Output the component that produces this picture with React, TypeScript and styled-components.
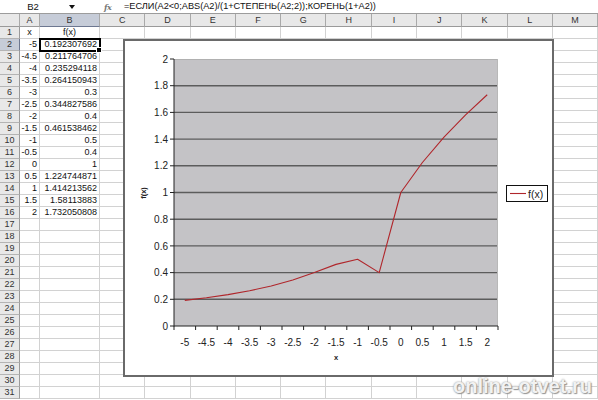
import React from 'react';
import styled, { createGlobalStyle } from 'styled-components';

const GlobalStyle = createGlobalStyle`
  html, body { margin: 0; padding: 0; background: #fff; overflow: hidden; }
  body { font-family: "Liberation Sans", Arial, sans-serif; }
`;

const Page = styled.div`
  position: relative;
  width: 598px;
  height: 400px;
  overflow: hidden;
  background: #fff;
  font-family: "Liberation Sans", Arial, sans-serif;
`;

const FormulaBar = styled.div`
  display: flex;
  align-items: center;
  height: 14px;
  box-sizing: border-box;
  border-bottom: 1px solid #9c9c9c;
  background: #fff;
  font-size: 9px;
  color: #111;
`;

const NameBox = styled.div`
  width: 66px;
  text-align: center;
  line-height: 13px;
  font-size: 9.5px;
`;

const DropArrow = styled.span`
  width: 0;
  height: 0;
  margin-left: 3px;
  border-left: 3px solid transparent;
  border-right: 3px solid transparent;
  border-top: 4px solid #111;
`;

const FxIcon = styled.span`
  margin-left: 29px;
  width: 17px;
  font-family: "DejaVu Serif", "Liberation Serif", serif;
  font-style: italic;
  font-weight: bold;
  font-size: 8px;
  color: #777;
  letter-spacing: -0.5px;
`;

const FormulaText = styled.span`
  margin-left: 3px;
  white-space: nowrap;
  line-height: 13px;
  font-size: 9.2px;
`;

const Sheet = styled.div`
  display: grid;
  grid-template-columns: 20px 20px 60px repeat(10, 45.3px) 1fr;
  grid-template-rows: 13px;
  grid-auto-rows: 12px;
  font-size: 9px;
  color: #111;
`;

const HeaderCell = styled.div<{ $selected?: boolean }>`
  box-sizing: border-box;
  display: flex;
  align-items: center;
  justify-content: center;
  background: ${p => (p.$selected ? '#c6ccd8' : '#e8e8e8')};
  color: #333;
  border-right: 1px solid #a9a9a9;
  border-bottom: 1px solid ${p => (p.$selected ? '#6d7790' : '#9a9a9a')};
  line-height: 11px;
`;

const RowHeader = styled.div<{ $selected?: boolean }>`
  box-sizing: border-box;
  display: flex;
  align-items: center;
  justify-content: center;
  background: ${p => (p.$selected ? '#c6ccd8' : '#e8e8e8')};
  color: #333;
  border-right: 1px solid ${p => (p.$selected ? '#6d7790' : '#9a9a9a')};
  border-bottom: 1px solid #b4b4b4;
  line-height: 11px;
`;

const Cell = styled.div<{ $align?: 'left' | 'center' | 'right'; $active?: boolean }>`
  box-sizing: border-box;
  position: relative;
  display: flex;
  align-items: center;
  justify-content: ${p => (p.$align === 'center' ? 'center' : p.$align === 'right' ? 'flex-end' : 'flex-start')};
  padding: 0 2px;
  border-right: 1px solid #d2d2d2;
  border-bottom: 1px solid #d2d2d2;
  white-space: nowrap;
  line-height: 11px;
  ${p =>
    p.$active
      ? `outline: 2px solid #000; outline-offset: -1px; z-index: 2;
         &::after { content: ''; position: absolute; right: -3px; bottom: -3px; width: 4px; height: 4px; background: #000; border: 1px solid #fff; }`
      : ''}
`;

const ChartFrame = styled.div`
  position: absolute;
  left: 123px;
  top: 39px;
  width: 431px;
  height: 338px;
  box-sizing: border-box;
  border: 2px solid #6a6a6a;
  background: #fff;
  z-index: 5;
`;

const ChartSvg = styled.svg`
  display: block;
  font-family: "Liberation Sans", Arial, sans-serif;
`;

const Watermark = styled.div`
  position: absolute;
  left: 453px;
  top: 376px;
  font-family: "Liberation Sans", Arial, sans-serif;
  font-weight: bold;
  font-size: 20px;
  line-height: 20px;
  color: #f2f2f2;
  text-shadow: 0 0 2px #8a8a8a, 1px 1px 1px #9a9a9a;
  z-index: 10;
  white-space: nowrap;
`;

const COLS = ['A', 'B', 'C', 'D', 'E', 'F', 'G', 'H', 'I', 'J', 'K', 'L', 'M'];

const XS = ['-5', '-4.5', '-4', '-3.5', '-3', '-2.5', '-2', '-1.5', '-1', '-0.5', '0', '0.5', '1', '1.5', '2'];
const FX = [
  '0.192307692', '0.211764706', '0.235294118', '0.264150943', '0.3', '0.344827586', '0.4',
  '0.461538462', '0.5', '0.4', '1', '1.224744871', '1.414213562', '1.58113883', '1.732050808',
];

const ROWS = 31;

function Chart() {
  const L = 49, T = 18, R = 373, B = 285;
  const W = R - L, H = B - T;
  const step = W / 15;
  const yOf = (v: number) => B - (v / 2) * H;
  const pts = FX.map((v, i) => `${(L + step * (i + 0.5)).toFixed(2)},${yOf(parseFloat(v)).toFixed(2)}`).join(' ');
  const yVals = [0, 0.2, 0.4, 0.6, 0.8, 1, 1.2, 1.4, 1.6, 1.8, 2];
  return (
    <ChartSvg width={427} height={334} viewBox="0 0 427 334">
      <rect x={L} y={T} width={W} height={H} fill="#c4c3c6" />
      {yVals.slice(1, 10).map(v => (
        <line key={v} x1={L} x2={R} y1={yOf(v)} y2={yOf(v)} stroke="#5c5c5c" strokeWidth={1.4} />
      ))}
      <line x1={L} x2={R} y1={T + 0.5} y2={T + 0.5} stroke="#b0b0b0" strokeWidth={1} />
      <line x1={R - 0.5} x2={R - 0.5} y1={T} y2={B} stroke="#b8b8b8" strokeWidth={1} />
      <line x1={L} x2={L} y1={T} y2={B + 0.5} stroke="#222" strokeWidth={1} />
      <line x1={L} x2={R} y1={B} y2={B} stroke="#222" strokeWidth={1} />
      {yVals.map(v => (
        <g key={'y' + v}>
          <line x1={L - 4} x2={L} y1={yOf(v)} y2={yOf(v)} stroke="#222" strokeWidth={1} />
          <text x={L - 6} y={yOf(v) + 3.6} fontSize={10} textAnchor="end" fill="#222">
            {String(v)}
          </text>
        </g>
      ))}
      {Array.from({ length: 16 }, (_, i) => (
        <line key={'t' + i} x1={L + step * i} x2={L + step * i} y1={B} y2={B + 4} stroke="#222" strokeWidth={1} />
      ))}
      {XS.map((x, i) => (
        <text key={'x' + x} x={L + step * (i + 0.5)} y={305} fontSize={10} textAnchor="middle" fill="#222">
          {x}
        </text>
      ))}
      <text x={211} y={319} fontSize={7.5} fontWeight="bold" textAnchor="middle" fill="#222">
        x
      </text>
      <text
        x={0}
        y={0}
        fontSize={7.5}
        fontWeight="bold"
        textAnchor="middle"
        fill="#222"
        transform="translate(20.5 152) rotate(-90)"
      >
        f(x)
      </text>
      <polyline points={pts} fill="none" stroke="#b0262b" strokeWidth={1.1} strokeLinejoin="round" />
      <rect x={381.5} y={144.5} width={41} height={16} fill="#fff" stroke="#111" strokeWidth={1} />
      <line x1={385} x2={401} y1={152.5} y2={152.5} stroke="#b0262b" strokeWidth={1.1} />
      <text x={403} y={156.5} fontSize={10.5} fill="#222">
        f(x)
      </text>
    </ChartSvg>
  );
}

export default function App() {
  const rows: React.ReactNode[] = [];
  for (let r = 1; r <= ROWS; r++) {
    rows.push(
      <RowHeader key={'rh' + r} $selected={r === 2}>
        {r}
      </RowHeader>,
    );
    COLS.forEach((c, ci) => {
      let content: React.ReactNode = '';
      let align: 'left' | 'center' | 'right' = 'right';
      if (r === 1 && ci === 0) {
        content = 'x';
        align = 'center';
      } else if (r === 1 && ci === 1) {
        content = 'f(x)';
        align = 'center';
      } else if (r >= 2 && r <= 16 && ci === 0) {
        content = XS[r - 2];
      } else if (r >= 2 && r <= 16 && ci === 1) {
        content = FX[r - 2];
      }
      rows.push(
        <Cell key={c + r} $align={align} $active={r === 2 && ci === 1}>
          {content}
        </Cell>,
      );
    });
  }

  return (
    <Page>
      <GlobalStyle />
      <FormulaBar>
        <NameBox>B2</NameBox>
        <DropArrow />
        <FxIcon>fx</FxIcon>
        <FormulaText>=ЕСЛИ(A2&lt;0;ABS(A2)/(1+СТЕПЕНЬ(A2;2));КОРЕНЬ(1+A2))</FormulaText>
      </FormulaBar>
      <Sheet>
        <HeaderCell />
        {COLS.map(c => (
          <HeaderCell key={c} $selected={c === 'B'}>
            {c}
          </HeaderCell>
        ))}
        {rows}
      </Sheet>
      <ChartFrame>
        <Chart />
      </ChartFrame>
      <Watermark>online-otvet.ru</Watermark>
    </Page>
  );
}
